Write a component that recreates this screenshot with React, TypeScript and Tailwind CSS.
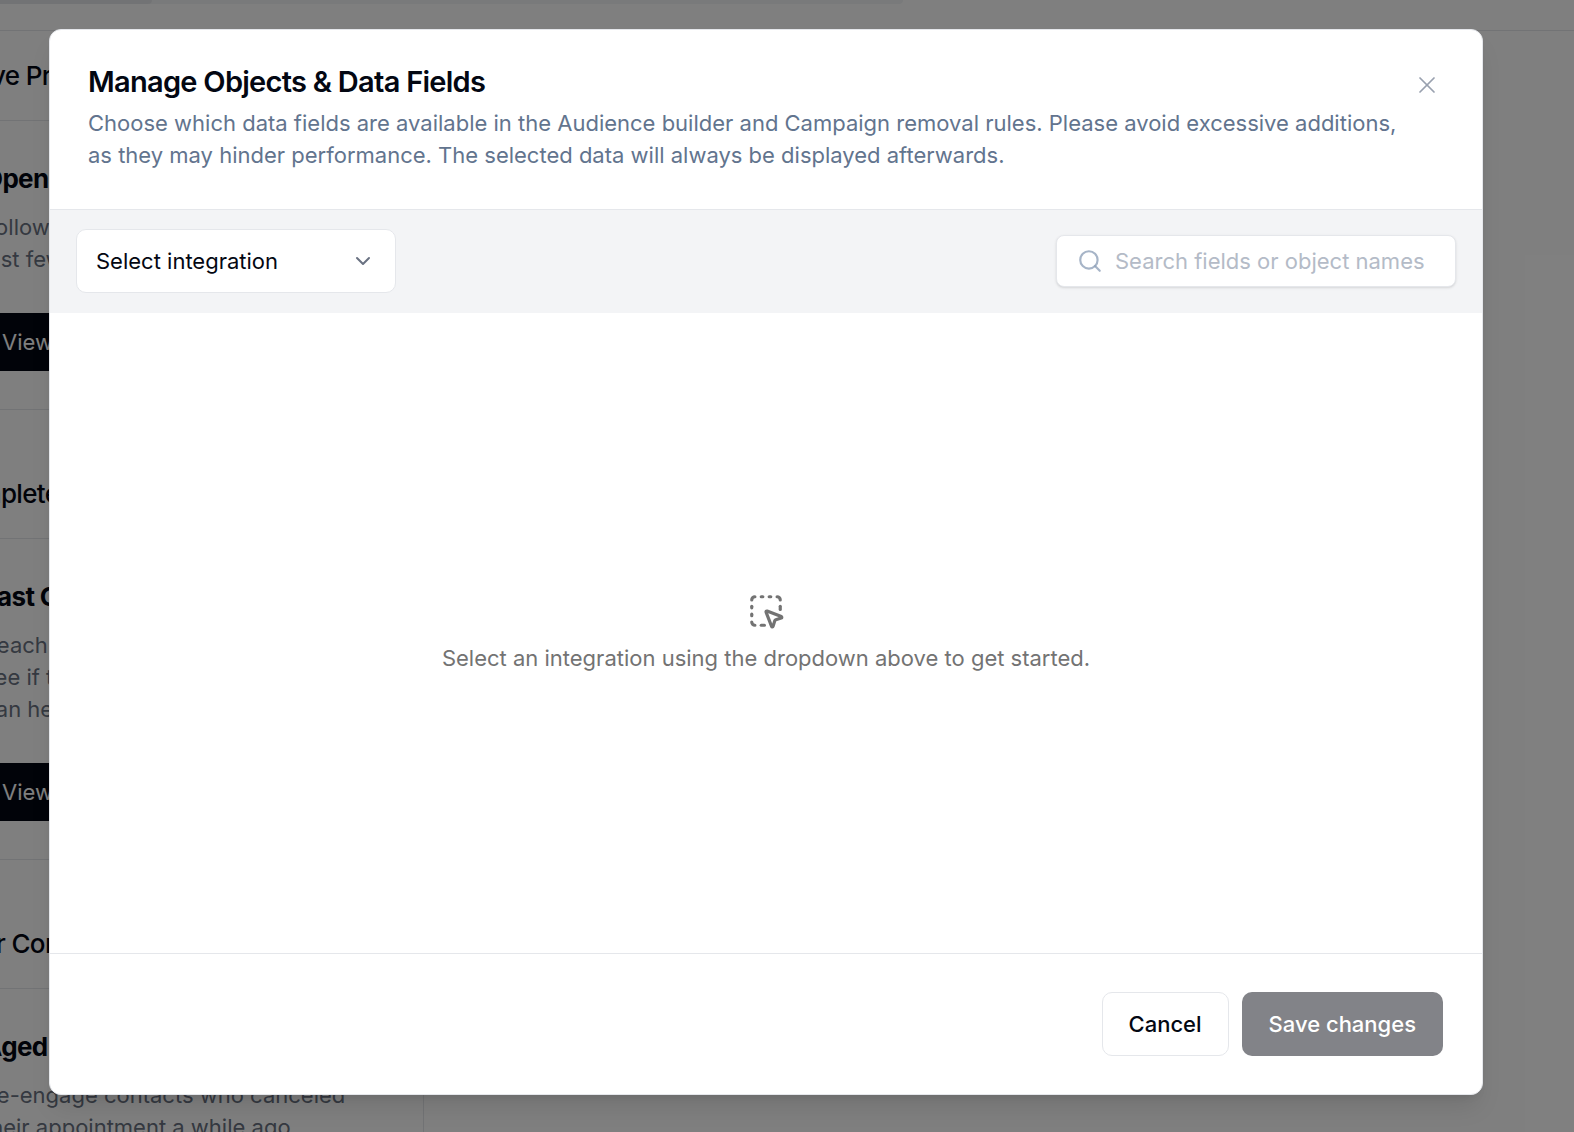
import { useState } from 'react'
import { ChevronDown, Search, SquareDashedMousePointer, X } from 'lucide-react'

const campaigns = [
    {
        group: 'Active Prospects',
        title: 'Open Leads',
        lines: ['Follow up with leads from', 'last few weeks'],
    },
    {
        group: 'Complete Visits',
        title: 'Last Chance',
        lines: ['Reach out to contacts and', 'see if there is anything we', 'can help with'],
    },
    {
        group: 'Later Contacts',
        title: 'Aged Cancellations',
        lines: ['Re-engage contacts who canceled', 'their appointment a while ago'],
    },
]

function CampaignBoard() {
    return (
        <div className="absolute inset-0 overflow-hidden bg-white" aria-hidden="true">
            <div className="h-[31px] border-b border-gray-200">
                <div className="h-1 w-[903px] rounded-br-md bg-gray-100">
                    <div className="h-full w-[152px] rounded-br-md bg-gray-200" />
                </div>
            </div>
            <div className="-ml-[55px] flex w-[479px] flex-col gap-[39px] border-r border-gray-200">
                {campaigns.map((c) => (
                    <section key={c.group} className="border-b border-gray-200">
                        <h2 className="flex h-[90px] items-center border-b border-gray-200 text-[26px] font-medium tracking-tight">
                            {c.group}
                        </h2>
                        <div className="py-[38px] pl-[38px]">
                            <h3 className="text-[26px] leading-10 font-bold tracking-tight">{c.title}</h3>
                            <div className="mt-3 text-[22px] leading-8 text-gray-500">
                                {c.lines.map((line) => (
                                    <p key={line} className="whitespace-nowrap">{line}</p>
                                ))}
                            </div>
                            <button tabIndex={-1} className="mt-[38px] h-[58px] w-80 bg-gray-950 pl-[19px] text-left text-[22px] text-white">
                                View
                            </button>
                        </div>
                    </section>
                ))}
            </div>
        </div>
    )
}

export default function App() {
    const [query, setQuery] = useState('')

    return (
        <div className="relative h-screen overflow-hidden font-['Inter',sans-serif] text-gray-950">
            <CampaignBoard />

            {/* Overlay */}
            <div className="absolute inset-0 flex bg-black/50 pt-[29px] pr-[91px] pb-[37px] pl-[49px]">
                <div
                    role="dialog"
                    aria-labelledby="dialog-title"
                    className="flex min-w-0 flex-1 flex-col overflow-hidden rounded-xl border border-gray-200 bg-white shadow-[0_16px_24px_-5px_rgba(0,0,0,0.1),0_6px_10px_-6px_rgba(0,0,0,0.1)]"
                >
                    <header className="flex items-start justify-between border-b border-gray-200 py-[38px] pr-[41px] pl-[38px]">
                        <div className="flex flex-col gap-[11px]">
                            <h1 id="dialog-title" className="text-[29px] leading-7 font-semibold tracking-tight">
                                Manage Objects &amp; Data Fields
                            </h1>
                            <p className="text-[22px] leading-8 text-slate-500">
                                Choose which data fields are available in the Audience builder and Campaign removal rules. Please avoid excessive additions, as they may hinder performance. The selected data will always be displayed afterwards.
                            </p>
                        </div>
                        <button aria-label="Close" className="mt-[3px] text-gray-400">
                            <X className="size-7" strokeWidth={1.5} />
                        </button>
                    </header>

                    <div className="flex items-center justify-between border-b border-gray-100 bg-gray-100 px-[26px] py-[19px]">
                        <div className="relative">
                            <select
                                aria-label="Integration"
                                className="h-16 w-80 appearance-none rounded-[10px] border border-gray-200 bg-white pr-12 pl-[19px] text-[22px]"
                            >
                                <option>Select integration</option>
                            </select>
                            <ChevronDown className="pointer-events-none absolute top-5 right-[21px] size-6 text-gray-500" />
                        </div>
                        <label className="flex h-[52px] w-[400px] items-center gap-3 rounded-lg border border-gray-200 bg-white px-5 shadow-sm">
                            <Search className="size-[26px] shrink-0 text-slate-400/80" />
                            <input
                                aria-label="Search fields"
                                value={query}
                                onChange={(e) => setQuery(e.target.value)}
                                placeholder="Search fields or object names"
                                className="min-w-0 flex-1 text-[22px] outline-none placeholder:text-[#b4bbc7]"
                            />
                        </label>
                    </div>

                    <main className="flex flex-1 flex-col items-center justify-center gap-3 text-neutral-500">
                        <SquareDashedMousePointer className="size-[38px]" />
                        <p className="text-[22px] leading-8">
                            Select an integration using the dropdown above to get started.
                        </p>
                    </main>

                    <footer className="flex justify-end gap-[13px] border-t border-gray-200 px-[39px] py-[38px]">
                        <button className="h-16 rounded-[10px] border border-gray-200 px-[26px] text-[22px] font-medium">
                            Cancel
                        </button>
                        <button disabled className="h-16 rounded-[10px] bg-[#828388] px-[27px] text-[22px] font-medium text-white">
                            Save changes
                        </button>
                    </footer>
                </div>
            </div>
        </div>
    )
}
